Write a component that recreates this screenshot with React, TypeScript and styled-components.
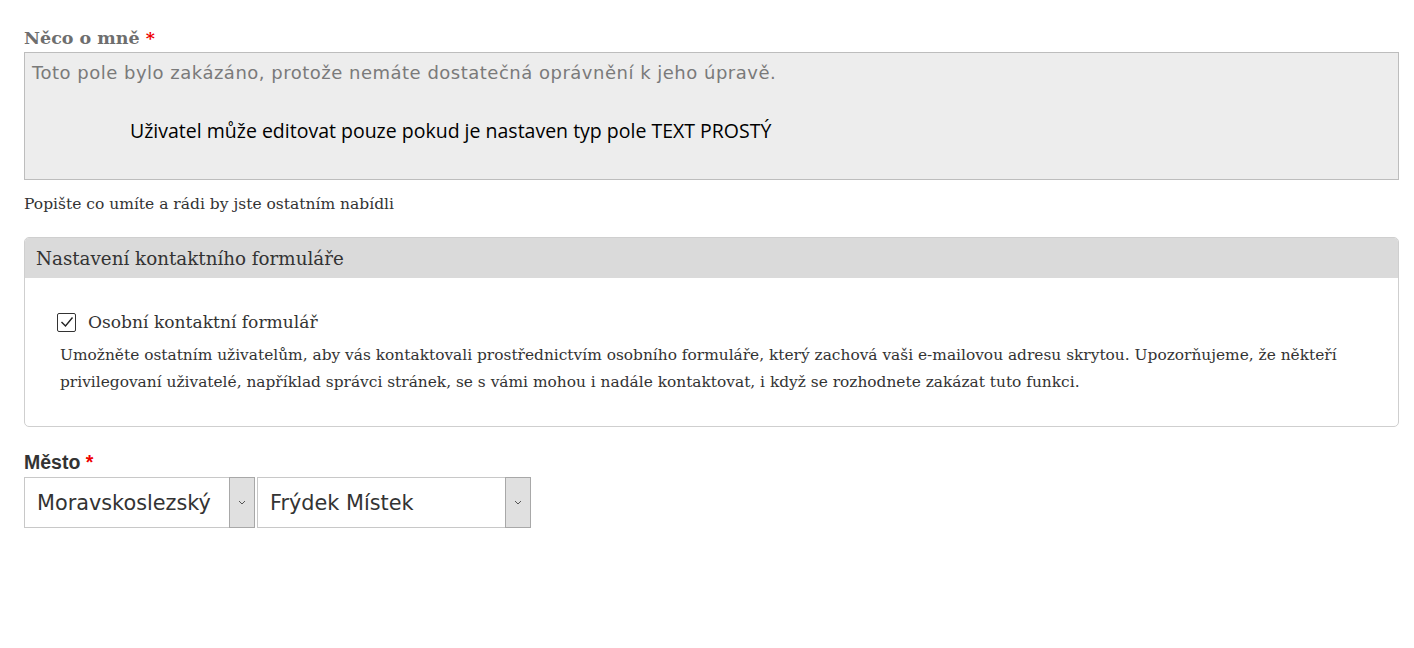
import React from "react";
import styled, { createGlobalStyle } from "styled-components";

const Global = createGlobalStyle`
  html, body { margin: 0; padding: 0; background: #fff; }
  body { font-family: "DejaVu Serif", Georgia, serif; color: #333; }
  * { box-sizing: border-box; }
`;

const Page = styled.div`
  padding: 24px 15px 0 24px;
  display: flex;
  flex-direction: column;
`;

const FieldLabel = styled.div<{ $sans?: boolean }>`
  font-family: ${(p) => (p.$sans ? '"Liberation Sans", Arial, sans-serif' : '"DejaVu Serif", Georgia, serif')};
  font-weight: bold;
  font-size: ${(p) => (p.$sans ? "19.5px" : "17.5px")};
  color: ${(p) => (p.$sans ? "#333" : "#6e6e6e")};
  line-height: 28px;
`;

const Star = styled.span`
  color: #e00;
`;

const DisabledArea = styled.div`
  height: 128px;
  background: #ededed;
  border: 1px solid #bdbdbd;
  padding: 8px 7px;
  display: flex;
  flex-direction: column;
`;

const DisabledNote = styled.div`
  font-family: "DejaVu Sans", Verdana, sans-serif;
  font-size: 18px;
  color: #7a7a7a;
  line-height: 24px;
  letter-spacing: 0.5px;
`;

const InnerText = styled.div`
  font-family: "Open Sans", "Noto Sans", sans-serif;
  font-size: 19.5px;
  color: #000;
  margin: 33px 0 0 98px;
  line-height: 26px;
`;

const Help = styled.div`
  font-size: 15.5px;
  line-height: 24px;
  margin-top: 12px;
  color: #333;
`;

const Fieldset = styled.div`
  margin-top: 21px;
  border: 1px solid #cfcfcf;
  border-radius: 5px;
  overflow: hidden;
`;

const Legend = styled.div`
  background: #dadada;
  height: 40px;
  padding: 0 11px;
  display: flex;
  align-items: center;
  font-size: 18.3px;
  color: #333;
`;

const FieldsetBody = styled.div`
  padding: 31px 34px 30px 35px;
`;

const CheckRow = styled.label`
  display: flex;
  align-items: center;
  gap: 12px;
  font-size: 17.1px;
  color: #333;
  line-height: 26px;
`;

const Box = styled.span`
  width: 19px;
  height: 19px;
  border: 1px solid #333;
  border-radius: 2px;
  display: inline-flex;
  align-items: center;
  justify-content: center;
  background: #fff;
  margin-left: -3px;
`;

const CheckDesc = styled.div`
  font-size: 15.4px;
  line-height: 27px;
  color: #333;
  margin-top: 7px;
`;

const City = styled.div`
  margin-top: 21px;
  display: flex;
  flex-direction: column;
`;

const SelectRow = styled.div`
  display: flex;
  gap: 2px;
  margin-top: 1px;
`;

const Select = styled.div<{ $w: number }>`
  width: ${(p) => p.$w}px;
  height: 51px;
  border: 1px solid #c8c8c8;
  display: flex;
  align-items: stretch;
  background: #fff;
`;

const SelectValue = styled.div`
  flex: 1;
  display: flex;
  align-items: center;
  padding-left: 12px;
  font-family: "DejaVu Sans", Verdana, sans-serif;
  font-size: 20.8px;
  color: #333;
`;

const Arrow = styled.div`
  width: 26px;
  background: #e0e0e0;
  border: 1px solid #a8a8a8;
  margin: -1px -1px -1px 0;
  display: flex;
  align-items: center;
  justify-content: center;
`;

const Chevron = () => (
  <svg width="8" height="5" viewBox="0 0 8 5">
    <path d="M1 1 L4 4 L7 1" fill="none" stroke="#555" strokeWidth="1" />
  </svg>
);

export default function App() {
  return (
    <>
      <Global />
      <Page>
        <FieldLabel>
          Něco o mně <Star>*</Star>
        </FieldLabel>
        <DisabledArea>
          <DisabledNote>Toto pole bylo zakázáno, protože nemáte dostatečná oprávnění k jeho úpravě.</DisabledNote>
          <InnerText>Uživatel může editovat pouze pokud je nastaven typ pole TEXT PROSTÝ</InnerText>
        </DisabledArea>
        <Help>Popište co umíte a rádi by jste ostatním nabídli</Help>

        <Fieldset>
          <Legend>Nastavení kontaktního formuláře</Legend>
          <FieldsetBody>
            <CheckRow>
              <Box>
                <svg width="14" height="12" viewBox="0 0 14 12">
                  <path d="M1.5 6 L5.5 10 L12.5 1.5" fill="none" stroke="#222" strokeWidth="1.4" />
                </svg>
              </Box>
              Osobní kontaktní formulář
            </CheckRow>
            <CheckDesc>
              Umožněte ostatním uživatelům, aby vás kontaktovali prostřednictvím osobního formuláře, který zachová vaši e-mailovou adresu skrytou. Upozorňujeme, že někteří privilegovaní uživatelé, například správci stránek, se s vámi mohou i nadále kontaktovat, i když se rozhodnete zakázat tuto funkci.
            </CheckDesc>
          </FieldsetBody>
        </Fieldset>

        <City>
          <FieldLabel $sans>
            Město <Star>*</Star>
          </FieldLabel>
          <SelectRow>
            <Select $w={231}>
              <SelectValue>Moravskoslezský</SelectValue>
              <Arrow>
                <Chevron />
              </Arrow>
            </Select>
            <Select $w={274}>
              <SelectValue>Frýdek Místek</SelectValue>
              <Arrow>
                <Chevron />
              </Arrow>
            </Select>
          </SelectRow>
        </City>
      </Page>
    </>
  );
}
